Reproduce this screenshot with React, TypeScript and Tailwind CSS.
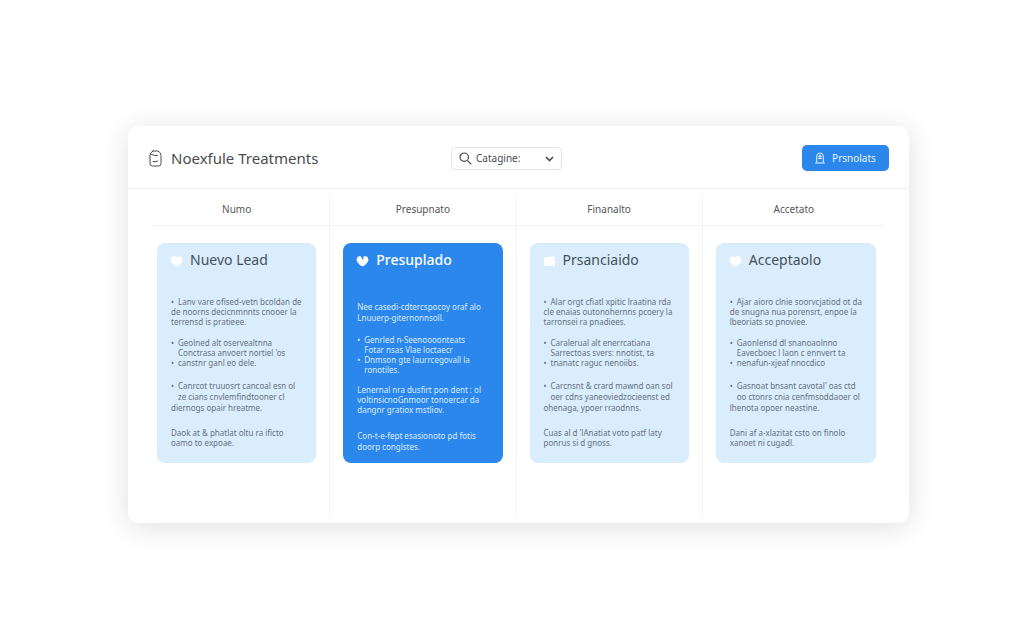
type Line = { text: string; kind?: "bullet" | "indent" };
type Block = { className: string; lines: Line[] };
type Lead = {
  column: string;
  title: string;
  icon: "heart" | "square";
  active?: boolean;
  blocks: Block[];
};

const leads: Lead[] = [
  {
    column: "Numo",
    title: "Nuevo Lead",
    icon: "heart",
    blocks: [
      {
        className: "leading-[10px]",
        lines: [
          { text: "Lanv vare ofised-vetn bcoldan de", kind: "bullet" },
          { text: "de noorns decicnmnnts cnooer la" },
          { text: "terrensd is pratieee." },
        ],
      },
      {
        className: "mt-[11px] leading-[10px]",
        lines: [
          { text: "Geolned alt oservealtnna", kind: "bullet" },
          { text: "Conctrasa anvoert nortiel 'os", kind: "indent" },
          { text: "canstnr ganl eo dele.", kind: "bullet" },
        ],
      },
      {
        className: "mt-3 leading-[11px]",
        lines: [
          { text: "Canrcot truuosrt cancoal esn ol", kind: "bullet" },
          { text: "ze cians cnvlemfindtooner cl", kind: "indent" },
          { text: "diernogs opair hreatme." },
        ],
      },
      {
        className: "mt-[15px] leading-[10px]",
        lines: [
          { text: "Daok at & phatlat oltu ra ificto" },
          { text: "oamo to expoae." },
        ],
      },
    ],
  },
  {
    column: "Presupnato",
    title: "Presuplado",
    icon: "heart",
    active: true,
    blocks: [
      {
        className: "mt-1 leading-[11px]",
        lines: [
          { text: "Nee casedi-cdtercspocoy oraf alo" },
          { text: "Lnuuerp-giternonnsoll." },
        ],
      },
      {
        className: "mt-3 leading-[10px]",
        lines: [
          { text: "Genrled n-Seenoooonteats", kind: "bullet" },
          { text: "Fotar nsas Vlae loctaecr", kind: "indent" },
          { text: "Dnmson gte laurrcegovall la", kind: "bullet" },
          { text: "ronotiles.", kind: "indent" },
        ],
      },
      {
        className: "mt-[10px] leading-[10px]",
        lines: [
          { text: "Lenernal nra dusfirt pon dent : ol" },
          { text: "voltinsicnoGnmoor tonoercar da" },
          { text: "dangnr gratiox mstliov." },
        ],
      },
      {
        className: "mt-[15px] leading-[11px]",
        lines: [
          { text: "Con-t-e-fept esasionoto pd fotis" },
          { text: "doorp conglstes." },
        ],
      },
    ],
  },
  {
    column: "Finanalto",
    title: "Prsanciaido",
    icon: "square",
    blocks: [
      {
        className: "leading-[10px]",
        lines: [
          { text: "Alar orgt cfiatl xpitic lraatina rda", kind: "bullet" },
          { text: "cle enaias outonohernns pcoery la" },
          { text: "tarronsei ra pnadiees." },
        ],
      },
      {
        className: "mt-[11px] leading-[10px]",
        lines: [
          { text: "Caralerual alt enerrcatiana", kind: "bullet" },
          { text: "Sarrectoas svers: nnotist, ta", kind: "indent" },
          { text: "tnanatc raguc nenoiibs.", kind: "bullet" },
        ],
      },
      {
        className: "mt-3 leading-[11px]",
        lines: [
          { text: "Carcnsnt & crard mawnd oan sol", kind: "bullet" },
          { text: "oer cdns yaneoviedzocieenst ed", kind: "indent" },
          { text: "ohenaga, ypoer rraodnns." },
        ],
      },
      {
        className: "mt-[15px] leading-[10px]",
        lines: [
          { text: "Cuas al d 'lAnatiat voto patf laty" },
          { text: "ponrus si d gnoss." },
        ],
      },
    ],
  },
  {
    column: "Accetato",
    title: "Acceptaolo",
    icon: "heart",
    blocks: [
      {
        className: "leading-[10px]",
        lines: [
          { text: "Ajar aioro clnie soorvcjatiod ot da", kind: "bullet" },
          { text: "de snugna nua porensrt, enpoe la" },
          { text: "lbeoriats so pnoviee." },
        ],
      },
      {
        className: "mt-[11px] leading-[10px]",
        lines: [
          { text: "Gaonlensd dl snanoaolnno", kind: "bullet" },
          { text: "Eavecboec l laon c ennvert ta", kind: "indent" },
          { text: "nenafun-xjeaf nnocdico", kind: "bullet" },
        ],
      },
      {
        className: "mt-3 leading-[11px]",
        lines: [
          { text: "Gasnoat bnsant cavotal' oas ctd", kind: "bullet" },
          { text: "oo ctonrs cnia cenfmsoddaoer ol", kind: "indent" },
          { text: "lhenota opoer neastine." },
        ],
      },
      {
        className: "mt-[15px] leading-[10px]",
        lines: [
          { text: "Dani af a-xlazitat csto on finolo" },
          { text: "xanoet ni cugadl." },
        ],
      },
    ],
  },
];

function BottleIcon() {
  return (
    <svg className="h-[17px] w-[13px]" viewBox="0 0 13 17" fill="none" stroke="currentColor" strokeLinecap="round">
      <path d="M4 1H9Q12 2.500 12 5.500V13.500Q12 16 9.500 16H3.500Q1 16 1 13.500V5.500Q1 2.500 4 1Z" />
      <path d="M2.500 4.500L4 4.800L5.500 5.500H8.500M4 11.500L6 11.800L8.500 11" />
    </svg>
  );
}

function LockIcon() {
  return (
    <svg className="h-3 w-[10px]" viewBox="0 0 10 12" fill="none" stroke="currentColor" strokeLinecap="round">
      <path d="M1.700 10V4Q2 1 5 1T8.300 4V10M.6 11H9.400M3.500 4.200H6.500M3.500 6.500H6.500M5 3V6.500" />
    </svg>
  );
}

function LeadIcon({ icon, notched }: { icon: "heart" | "square"; notched?: boolean }) {
  return (
    <svg className="h-3 w-[13px]" viewBox="0 0 13 12" fill="white">
      {icon === "square" ? (
        <path d="M1 2.500Q1 2 1.500 2H6L7 1.500H11.500Q12 1.500 12 2V10.500Q12 11 11.500 11H1.500Q1 11 1 10.500Z" />
      ) : notched ? (
        <path d="M5 1.500Q2.500.8 1.200 2.500Q0 4.500 1.300 7Q3 9.800 6.500 11.500Q10 9.800 11.700 7Q13 4.500 11.800 2.500Q10.500.8 7.500 1.500L7.500 3.500L6.500 4.800L5.800 3.500Z" />
      ) : (
        <path d="M6.500 2.500Q5 .8 2.800 1.300Q.5 2 .6 5Q.8 8.500 6.500 11.500Q12.200 8.500 12.400 5Q12.500 2 10.200 1.300Q8 .8 6.500 2.500Z" />
      )}
    </svg>
  );
}

function LeadCard({ lead }: { lead: Lead }) {
  return (
    <article
      className={`mx-[13px] mt-[17px] rounded-lg px-[14px] ${
        lead.active ? "bg-[#2b87ec] pb-[11px] text-[#d9ebff]" : "bg-[#daedfd] pb-[15px] text-[#66717d]"
      }`}
    >
      <h3
        className={`-ml-px flex h-[54px] items-start gap-[7px] pt-[7px] text-sm leading-5 ${
          lead.active ? "font-medium text-white" : "text-[#465059]"
        }`}
      >
        <span className="pt-[5px]">
          <LeadIcon icon={lead.icon} notched={lead.active} />
        </span>
        {lead.title}
      </h3>
      {lead.blocks.map((block, i) => (
        <div key={i} className={`text-[8px] whitespace-nowrap ${block.className}`}>
          {block.lines.map((line) => (
            <p key={line.text} className="flex">
              {line.kind && <span className="w-[7px]">{line.kind === "bullet" && "•"}</span>}
              {line.text}
            </p>
          ))}
        </div>
      ))}
    </article>
  );
}

export default function App() {
  return (
    <div className="min-h-screen bg-white pt-[126px] pr-[115px] pb-16 pl-32 font-['Noto_Sans',sans-serif]">
      <main className="rounded-[10px] bg-white shadow-[0_4px_28px_rgba(0,0,0,0.13)]">
        <header className="flex items-center border-b border-[#eeeeee] pt-[19px] pr-5 pb-[17px] pl-[21px] text-[#4b4b4d]">
          <div className="mr-[6px] flex w-2/5 items-center gap-[9px]">
            <BottleIcon />
            <h1 className="text-[15px] leading-5 whitespace-nowrap">Noexfule Treatments</h1>
          </div>
          <div className="relative">
            <svg className="pointer-events-none absolute top-[5px] left-2 size-[13px]" viewBox="0 0 13 13" fill="none" stroke="currentColor" strokeWidth="1.2">
              <circle cx="5.200" cy="5.200" r="4.200" />
              <path d="M8.300 8.300L12.300 12.300" />
            </svg>
            <select
              aria-label="Category"
              className="block h-[23px] w-[111px] appearance-none rounded border border-[#e4e4e4] bg-white pl-6 text-[10px]"
            >
              <option>Catagine:</option>
            </select>
            <svg className="pointer-events-none absolute top-[9px] right-2 h-[6px] w-[9px]" viewBox="0 0 9 6" fill="none" stroke="currentColor" strokeWidth="1.600">
              <path d="M1 1L4.500 4.500L8 1" />
            </svg>
          </div>
          <button className="ml-auto flex h-[26px] w-[87px] items-center justify-center gap-[7px] rounded-[5px] bg-[#2b87ec] text-[10px] text-[#e8f3ff]">
            <LockIcon />
            Prsnolats
          </button>
        </header>
        <div className="grid grid-cols-4 py-[6px] pr-5 pl-4">
          {leads.map((lead) => (
            <section key={lead.column} className="group border-r border-[#f0f2f4] pb-[54px] last:border-r-0">
              <h2 className="flex h-[31px] items-center justify-center border-b border-[#f1f1f1] pb-[2px] text-[10px] text-[#55565a] group-first:ml-2 group-first:pr-2 group-last:mr-1">
                {lead.column}
              </h2>
              <LeadCard lead={lead} />
            </section>
          ))}
        </div>
      </main>
    </div>
  );
}
